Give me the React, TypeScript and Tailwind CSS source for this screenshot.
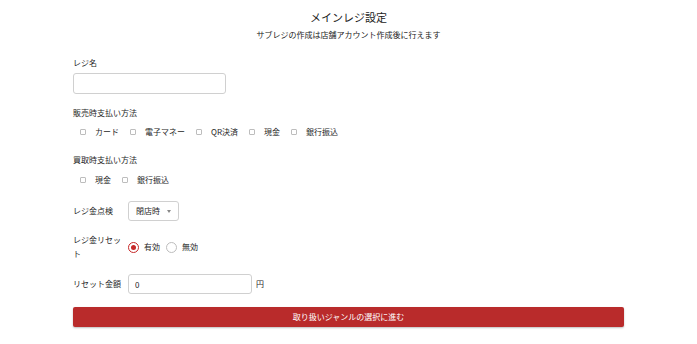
import React from "react";

const font = { fontFamily: '"Noto Sans CJK JP", "Noto Sans", sans-serif' };

const Check = ({ label }: { label: string }) => (
  <label className="flex items-center mr-[11px]">
    <span className="w-[6px] h-[6px] border border-[#bdbdbd] rounded-[1px] bg-white" />
    <span className="ml-[9px]">{label}</span>
  </label>
);

const Radio = ({ label, checked }: { label: string; checked?: boolean }) => (
  <label className="flex items-center mr-[6px]">
    <span
      className={`w-[11px] h-[11px] rounded-full border flex items-center justify-center ${
        checked ? "border-[#c62828]" : "border-[#bdbdbd]"
      }`}
    >
      {checked && <span className="w-[5px] h-[5px] rounded-full bg-[#c62828]" />}
    </span>
    <span className="ml-[5px]">{label}</span>
  </label>
);

export default function App() {
  return (
    <div className="bg-white w-[697px] h-[344px] text-[#262626] text-[8px] leading-[12px]" style={font}>
      <div className="w-[551px] mx-auto pt-[10px]">
        <h1 className="text-center text-[11px] leading-[14px] text-[#222]">メインレジ設定</h1>
        <p className="text-center mt-[5px] text-[#222]">サブレジの作成は店舗アカウント作成後に行えます</p>

        <div className="mt-[16px]">レジ名</div>
        <input className="mt-[4px] block w-[153px] h-[21px] border border-[#d0d0d0] rounded-[3px] outline-none" />

        <div className="mt-[13px]">販売時支払い方法</div>
        <div className="mt-[7px] flex pl-[7px]">
          <Check label="カード" />
          <Check label="電子マネー" />
          <Check label="QR決済" />
          <Check label="現金" />
          <Check label="銀行振込" />
        </div>

        <div className="mt-[16px]">買取時支払い方法</div>
        <div className="mt-[8px] flex pl-[7px]">
          <Check label="現金" />
          <Check label="銀行振込" />
        </div>

        <div className="mt-[15px] flex items-center">
          <div className="w-[55px]">レジ金点検</div>
          <div className="w-[51px] h-[20px] border border-[#d0d0d0] rounded-[3px] flex items-center justify-between px-[7px]">
            <span>閉店時</span>
            <span className="w-0 h-0 border-l-[2.5px] border-r-[2.5px] border-t-[3px] border-l-transparent border-r-transparent border-t-[#888]" />
          </div>
        </div>

        <div className="mt-[12px] flex items-center">
          <div className="w-[55px] pr-[5px] leading-[14px]">レジ金リセット</div>
          <Radio label="有効" checked />
          <Radio label="無効" />
        </div>

        <div className="mt-[13px] flex items-center">
          <div className="w-[55px]">リセット金額</div>
          <input
            defaultValue="0"
            className="w-[124px] h-[20px] border border-[#d0d0d0] rounded-[3px] px-[6px] outline-none text-[8px] text-[#262626]"
            style={font}
          />
          <span className="ml-[4px]">円</span>
        </div>

        <button className="mt-[13px] w-full h-[20px] bg-[#b92b2b] text-white rounded-[2px] shadow-[0_1px_2px_rgba(0,0,0,0.25)] text-[8px]" style={font}>
          取り扱いジャンルの選択に進む
        </button>
      </div>
    </div>
  );
}
